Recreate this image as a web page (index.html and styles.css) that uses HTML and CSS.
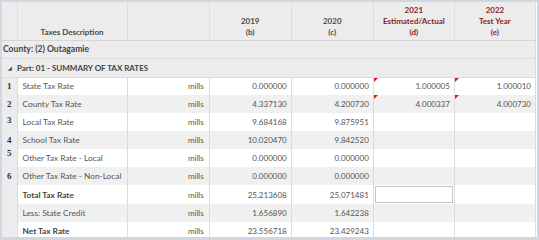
FILE: index.html
```html
<html>
<head>
<meta http-equiv="content-type" content="text/html; charset=utf-8">
<link rel="stylesheet" href="styles.css">
<title>Taxes</title>
</head>
<body>
<div class=grid>
<table class=rates>
<colgroup>
<col class=c-num><col class=c-desc><col class=c-unit><col class=c-val><col class=c-val><col class=c-val2><col class=c-val2>
</colgroup>
<thead>
<tr class=head>
<th></th>
<th class=hdesc>Taxes Description</th>
<th></th>
<th>2019<br>(b)</th>
<th>2020<br>(c)</th>
<th class=red>2021<br>Estimated/Actual<br>(d)</th>
<th class=red>2022<br>Test Year<br>(e)</th>
</tr>
</thead>
<tbody>
<tr class=group><td colspan=7 class=county>County: (2) Outagamie</td></tr>
<tr class=group><td colspan=7 class=part><span class=tri>&#9698;</span> Part: 01 - SUMMARY OF TAX RATES</td></tr>
<tr class=odd><td class=num>1</td><td class=desc>State Tax Rate</td><td class=unit>mills</td><td>0.000000</td><td>0.000000</td><td class=flag>1.000005</td><td class=flag>1.000010</td></tr>
<tr class=even><td class=num>2</td><td class=desc>County Tax Rate</td><td class=unit>mills</td><td>4.337130</td><td>4.200730</td><td class=flag>4.000337</td><td class=flag>4.000730</td></tr>
<tr class=odd><td class="num up">3</td><td class=desc>Local Tax Rate</td><td class=unit>mills</td><td>9.684168</td><td>9.875951</td><td></td><td></td></tr>
<tr class=even><td class=num>4</td><td class=desc>School Tax Rate</td><td class=unit>mills</td><td>10.020470</td><td>9.842520</td><td></td><td></td></tr>
<tr class=odd><td class="num top">5</td><td class=desc>Other Tax Rate - Local</td><td class=unit>mills</td><td>0.000000</td><td>0.000000</td><td></td><td></td></tr>
<tr class=even><td class=num>6</td><td class=desc>Other Tax Rate - Non-Local</td><td class=unit>mills</td><td>0.000000</td><td>0.000000</td><td></td><td></td></tr>
<tr class=odd><td class=num></td><td class="desc strong">Total Tax Rate</td><td class=unit>mills</td><td>25.213608</td><td>25.071481</td><td class=edit><div class=editbox></div></td><td></td></tr>
<tr class=even><td class=num></td><td class=desc>Less: State Credit</td><td class=unit>mills</td><td>1.656890</td><td>1.642238</td><td></td><td></td></tr>
<tr class=odd><td class=num></td><td class="desc strong">Net Tax Rate</td><td class=unit>mills</td><td>23.556718</td><td>23.429243</td><td></td><td></td></tr>
</tbody>
</table>
</div>
</body>
</html>
```

FILE: styles.css
```css
html,body{margin:0;padding:0;background:#ffffff}
body{font-family:"Lato","Open Sans",sans-serif;color:#555555;font-size:8px}
.grid{width:539px;height:240px;box-sizing:border-box;border:2px solid #cfd7e2;border-bottom-width:3px;overflow:hidden;background:#ffffff}
.rates{border-collapse:collapse;table-layout:fixed;width:534px;font-family:"Lato","Open Sans",sans-serif;font-size:8px;color:#555555}
.c-num{width:15px}
.c-desc{width:110px}
.c-unit{width:82px}
.c-val{width:82px}
.c-val2{width:81px}
.rates td,.rates th{padding:0 4px;border-right:1px solid #dcdcdc;white-space:nowrap;overflow:hidden}
.head th{height:38px;background:#ececec;font-weight:bold;color:#4a4a4a;text-align:center;vertical-align:bottom;line-height:11px;padding-bottom:2px;border-bottom:1px solid #d6d6d6}
.head th.red{color:#8c1c1c}
.group td{background:#ececec;border-bottom:1px solid #dcdcdc;color:#444444;font-weight:bold;height:18px;padding-left:1px}
.group td.county{font-size:8.6px}
.group td.part{padding-left:6px;height:19px}
.tri{font-size:5px;color:#555555;margin-right:3px;vertical-align:1px}
.odd td,.even td{height:18px;text-align:right;padding-right:4px}
.odd td{background:#ffffff}
.even td{background:#f0f0f0}
.rates td.num{background:#ececec;text-align:center;padding:0;font-family:"Liberation Serif",serif;font-weight:bold;color:#333333;font-size:9px}
.rates td.up{vertical-align:top;padding-top:2px}
.rates td.top{vertical-align:top;line-height:9px}
.rates td.desc{text-align:left;padding-left:5px;font-size:8.3px}
.rates td.strong{font-weight:bold;color:#444444}
.rates td.unit{padding-right:5px}
.flag{position:relative}
.flag::before{content:"";position:absolute;left:0;top:0;border-top:4px solid #e0101a;border-right:4px solid transparent}
.rates td.edit{padding:1px 1px}
.editbox{height:15px;border:1px solid #c4c4c4;background:#ffffff}
```
